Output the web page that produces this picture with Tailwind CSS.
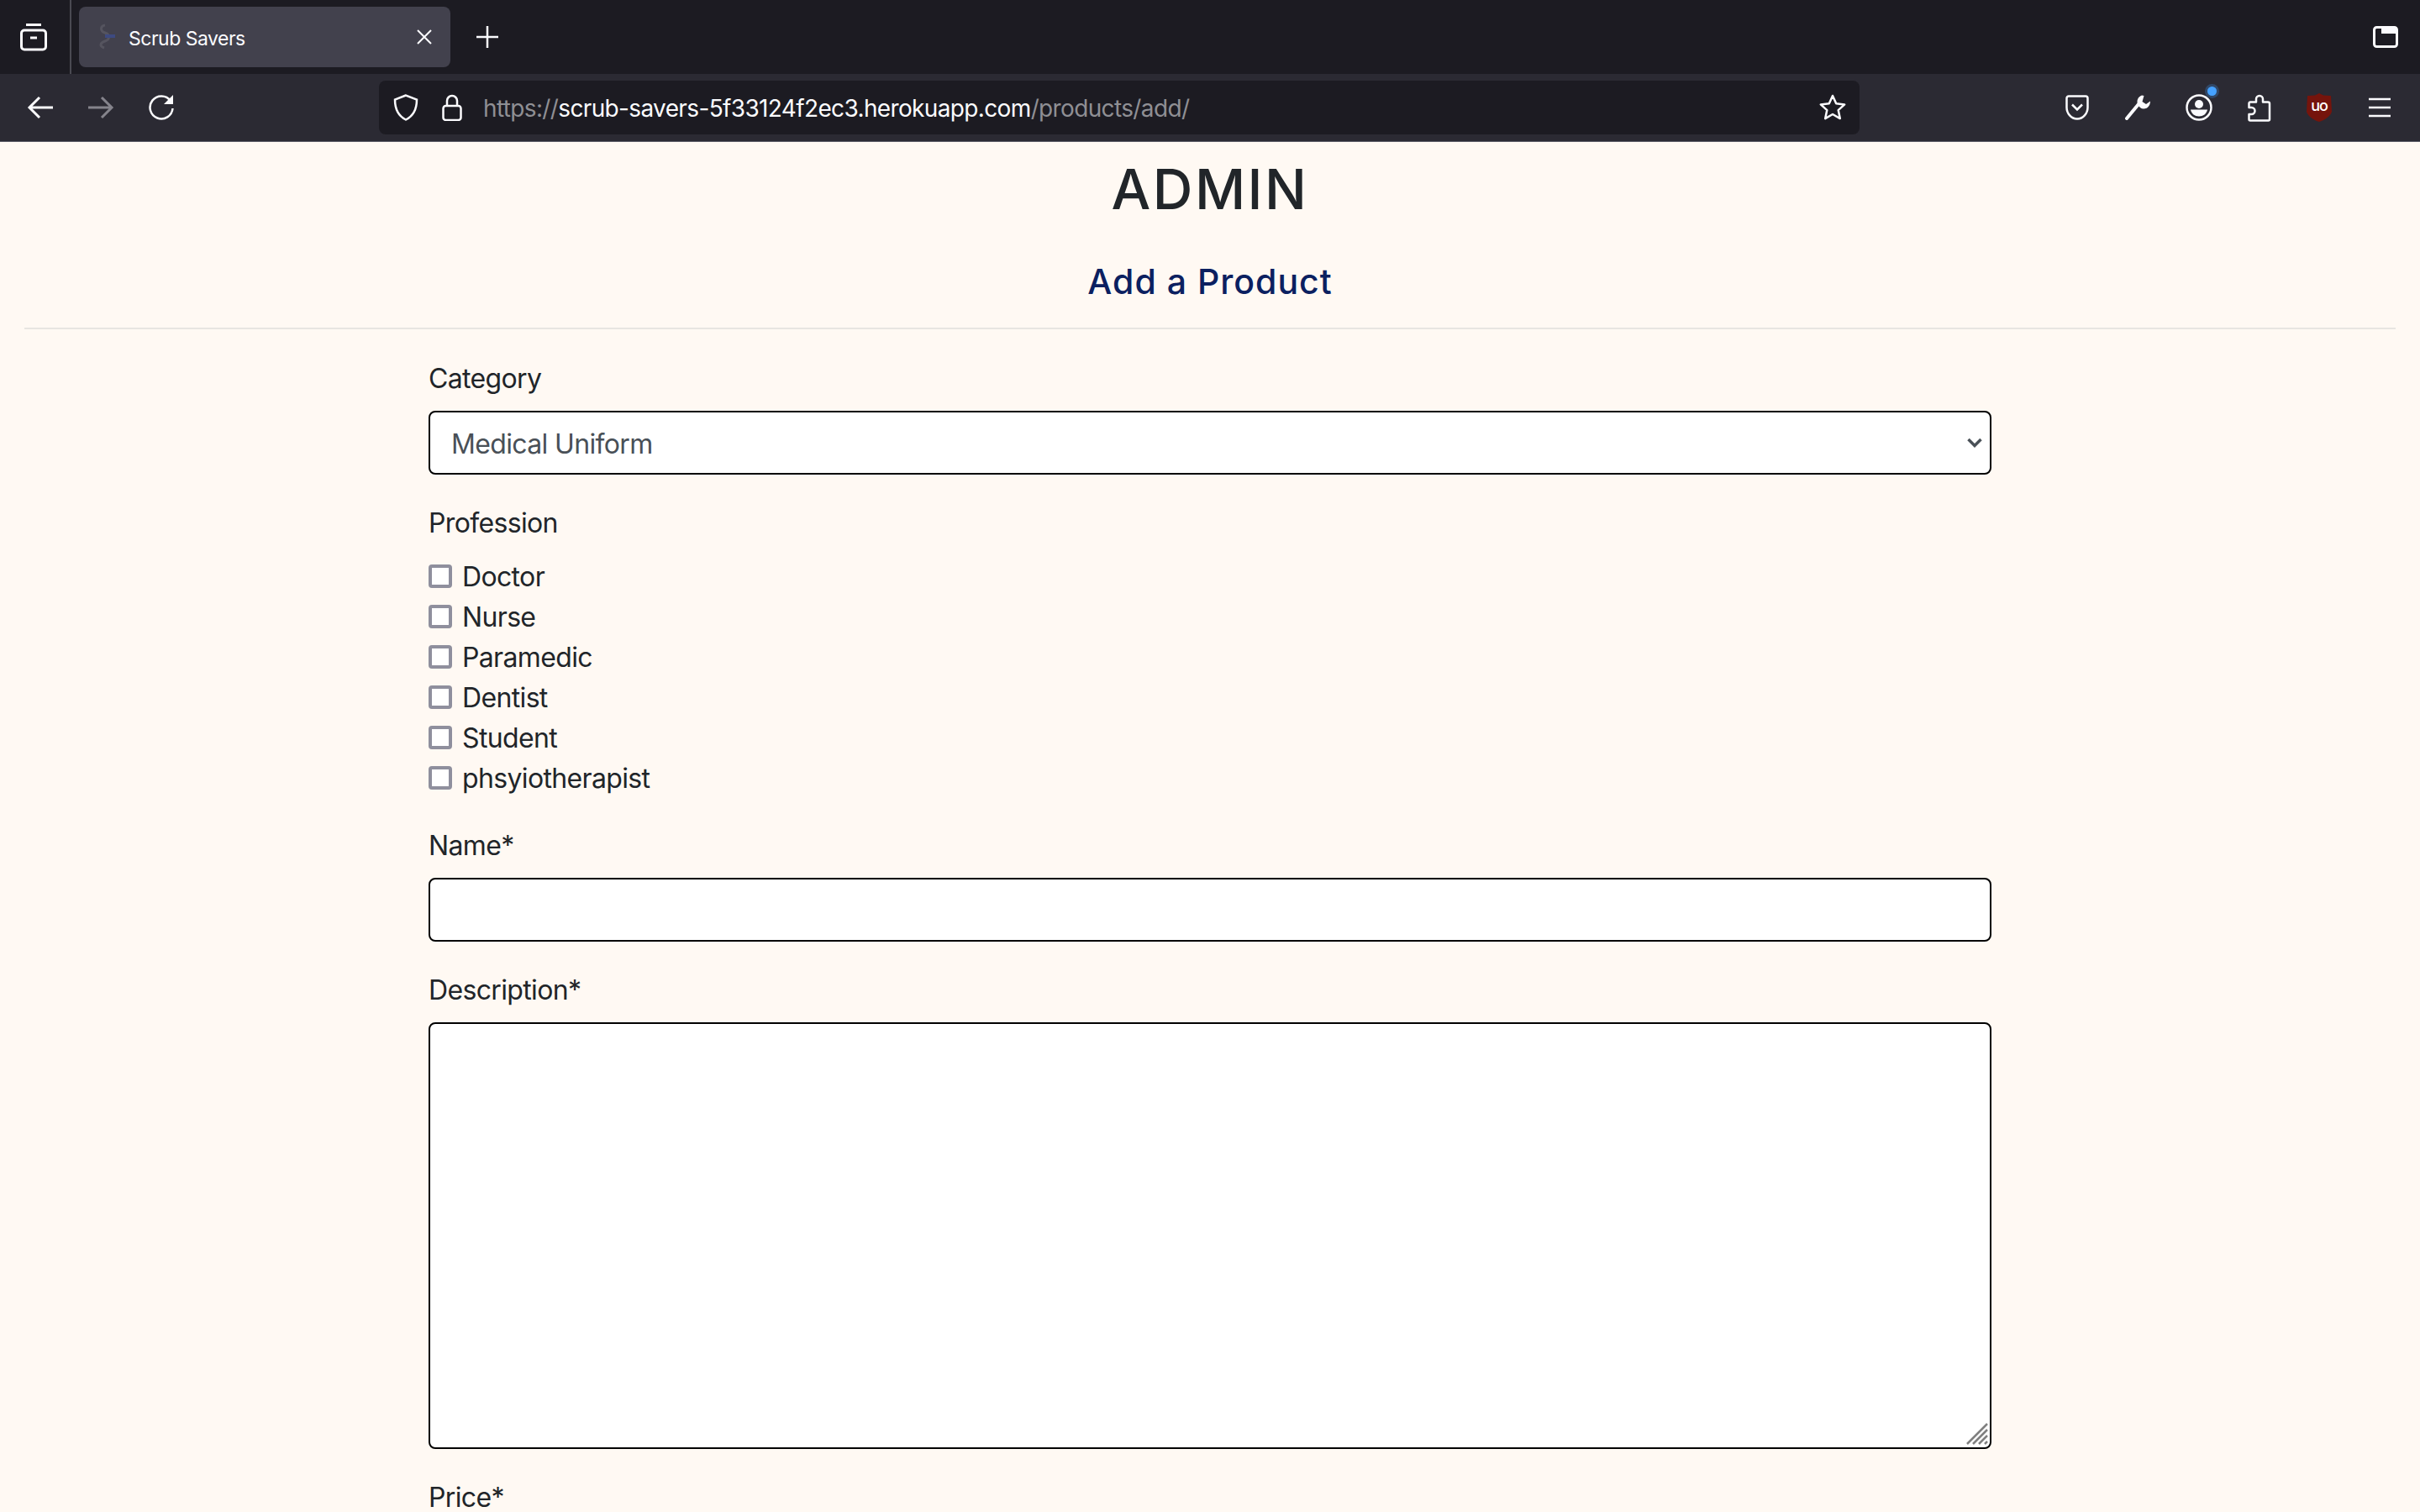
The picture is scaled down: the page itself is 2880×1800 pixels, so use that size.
<!DOCTYPE html>
<html lang="en">
<head>
    <meta charset="UTF-8">
    <title>Scrub Savers</title>
    <script src="https://cdn.jsdelivr.net/npm/@tailwindcss/browser@4"></script>
</head>
<body class="h-[1800px] overflow-hidden bg-[#fff9f3] font-['Inter',sans-serif] text-[32px] leading-[48px] tracking-[-0.65px] text-[#212529]">

    <!-- Tab strip -->
    <div class="flex h-[88px] items-center bg-[#1c1b22] text-white">
        <div class="flex h-[88px] w-[85px] shrink-0 items-center justify-center border-r-2 border-[#4a4a52]">
            <svg class="-ml-[3px]" width="36" height="36" viewBox="0 0 36 36" fill="none" stroke="#fbfbfe" stroke-width="3"><path d="M9 3.500h18"/><rect x="3.500" y="10" width="29" height="23" rx="3.500"/><path d="M14 19h8"/></svg>
        </div>
        <div class="ml-[9px] flex h-[72px] w-[442px] items-center rounded-[8px] bg-[#42414d] pl-[18px] pr-[22px]">
            <svg width="26" height="32" viewBox="0 0 26 32" fill="none"><path d="M13 2c-6 1-6 7 0 9s6 8 0 10-7 6-1 8" stroke="#55545f" stroke-width="3"/><path d="M13 15h12" stroke="#3d4a80" stroke-width="4"/></svg>
            <span class="ml-[15px] flex-1 pt-[3px] text-[23px] leading-[32px] tracking-[-0.5px] text-[#fbfbfe]">Scrub Savers</span>
            <svg width="18" height="18" viewBox="0 0 18 18" stroke="#fbfbfe" stroke-width="2"><path d="M1 1l16 16M17 1L1 17"/></svg>
        </div>
        <div class="ml-[16px] flex w-[56px] justify-center">
            <svg width="26" height="26" viewBox="0 0 26 26" stroke="#fbfbfe" stroke-width="2.500"><path d="M13 0v26M0 13h26"/></svg>
        </div>
        <div class="ml-auto mr-[26px]">
            <svg width="30" height="26" viewBox="0 0 30 26" fill="none"><rect x="1.500" y="1.500" width="27" height="23" rx="3" stroke="#fbfbfe" stroke-width="3"/><path d="M10 2h18v7H10z" fill="#fbfbfe"/></svg>
        </div>
    </div>

    <!-- Navigation toolbar -->
    <div class="flex h-[81px] items-center border-b border-[#5b5b66] bg-[#2b2a33] px-[12px] pb-[1px] text-white">
        <div class="flex h-[72px] w-[72px] items-center justify-center">
            <svg width="32" height="28" viewBox="0 0 32 28" fill="none" stroke="#fbfbfe" stroke-width="3"><path d="M31 14H3M15 2L3 14l12 12"/></svg>
        </div>
        <div class="flex h-[72px] w-[72px] items-center justify-center">
            <svg width="32" height="28" viewBox="0 0 32 28" fill="none" stroke="#85848c" stroke-width="3"><path d="M1 14h28M17 2l12 12-12 12"/></svg>
        </div>
        <div class="flex h-[72px] w-[72px] items-center justify-center">
            <svg width="32" height="32" viewBox="0 0 32 32" fill="none"><path d="M27 8A13.500 13.500 0 1 0 29.500 17" stroke="#fbfbfe" stroke-width="2.500"/><path d="M30 1v11H19z" fill="#fbfbfe"/></svg>
        </div>

        <div class="ml-[223px] flex h-[64px] w-[1762px] items-center rounded-[8px] bg-[#1c1b22] pl-[17px] pr-[16px]">
            <svg width="30" height="32" viewBox="0 0 30 32" fill="none" stroke="#fbfbfe" stroke-width="2.500"><path d="M15 1.500 2 6.500c0 11 3 19 13 24 10-5 13-13 13-24z"/></svg>
            <svg class="ml-[28px]" width="24" height="32" viewBox="0 0 24 32" fill="none" stroke="#fbfbfe" stroke-width="2.500"><path d="M6 15V8a6 6 0 0 1 12 0v7"/><rect x="1.500" y="14" width="21" height="17" rx="3"/></svg>
            <span class="ml-[25px] flex-1 pt-[2px] text-[28px] leading-[40px] tracking-[-0.64px] text-[#fbfbfe]"><span class="text-[#8f8f94]">https://</span>scrub-savers-5f33124f2ec3.herokuapp.com<span class="text-[#8f8f94]">/products/add/</span></span>
            <svg width="32" height="32" viewBox="0 0 32 32" fill="none" stroke="#fbfbfe" stroke-width="2.500" stroke-linejoin="round"><path d="M16 2l4.200 9.300 10 1.100-7.500 6.700 2.100 10L16 24l-8.800 5.100 2.100-10-7.500-6.700 10-1.100z"/></svg>
        </div>

        <div class="ml-auto flex">
            <div class="flex h-[72px] w-[72px] items-center justify-center">
                <svg width="28" height="30" viewBox="0 0 28 30" fill="none" stroke="#fbfbfe" stroke-width="2.500"><path d="M4 1.500h20A2.500 2.500 0 0 1 26.500 4v11c0 7-5.500 13.500-12.500 13.500S1.500 22 1.500 15V4A2.500 2.500 0 0 1 4 1.500z"/><path d="M8 11.500l6 6 6-6"/></svg>
            </div>
            <div class="flex h-[72px] w-[72px] items-center justify-center">
                <svg width="32" height="32" viewBox="0 0 32 32" fill="none"><path d="M3 29 17 12" stroke="#fbfbfe" stroke-width="4" stroke-linecap="round"/><path d="M21 1.500c-4.500 1.500-6.500 6-5 10.500 1.500 4.500 6 6.500 10 5 3-1.200 5-4.500 5-8.500l-5 3.500-4.500-3 2-7z" fill="#fbfbfe"/></svg>
            </div>
            <div class="relative flex h-[72px] w-[72px] items-center justify-center">
                <svg class="ml-[2px]" width="32" height="32" viewBox="0 0 32 32" fill="none"><circle cx="16" cy="16" r="14.500" stroke="#fbfbfe" stroke-width="2.500"/><circle cx="16" cy="12" r="5" fill="#fbfbfe"/><path d="M6 18.500h20c-1 5-5 8-10 8s-9-3-10-8z" fill="#fbfbfe"/></svg>
                <span class="absolute left-[47px] top-[11px] h-[11px] w-[11px] rounded-full bg-[#45a1ff] ring-[3px] ring-[#45a1ff]/25"></span>
            </div>
            <div class="flex h-[72px] w-[72px] items-center justify-center">
                <svg class="ml-[2px]" width="28" height="34" viewBox="0 0 28 34" fill="none" stroke="#fbfbfe" stroke-width="2.500" stroke-linejoin="round"><path d="M3 32.500a1.500 1.500 0 0 1-1.500-1.500v-6h3a4 4 0 0 0 0-8h-3v-5a1.500 1.500 0 0 1 1.500-1.500h7V7a4 4 0 0 1 8 0v3.500h6a2 2 0 0 1 2 2V31a1.500 1.500 0 0 1-1.500 1.500z"/></svg>
            </div>
            <div class="flex h-[72px] w-[72px] items-center justify-center">
                <svg width="30" height="34" viewBox="0 0 30 34"><path d="M15 0l5 2.500 9 .5 1 19c-2 6-9 10-15 12C9 32 2 28 0 22L1 3l9-.5z" fill="#75140c"/><text x="15" y="21" text-anchor="middle" fill="#fff" font-family="Inter, sans-serif" font-size="18" font-weight="500" letter-spacing="-1">uo</text></svg>
            </div>
            <div class="flex h-[72px] w-[72px] items-center justify-center">
                <svg width="26" height="24" viewBox="0 0 26 24" stroke="#fbfbfe" stroke-width="2.500"><path d="M0 2h26M0 12h26M0 22h26"/></svg>
            </div>
        </div>
    </div>

    <!-- Page -->
    <h1 class="mt-[18px] text-center text-[66px] leading-[76px] font-medium tracking-[2.500px] text-[#212529]">ADMIN</h1>
    <h2 class="mt-[46px] text-center text-[41px] leading-[52px] font-medium tracking-[1px] text-[#0b2060]">Add a Product</h2>
    <div class="mx-[29px] mt-[29px] border-t-2 border-[#e8e5e1]"></div>

    <form class="mx-auto mt-[35px] w-[1860px]">
        <label class="mb-[14px] block">Category</label>
        <div class="relative mb-[34px]">
            <select class="block h-[76px] w-full appearance-none rounded-[8px] border-2 border-black bg-white px-[25px] pt-[3px] text-[#495057]">
                <option>Medical Uniform</option>
            </select>
            <svg class="absolute right-[11px] top-[32px]" width="18" height="12" viewBox="0 0 18 12" fill="none" stroke="#495057" stroke-width="3.500"><path d="M1.500 2 9 9.500 16.500 2"/></svg>
        </div>

        <label class="mb-[16px] block">Profession</label>
        <div class="mb-[32px]">
            <label class="flex h-[48px] items-center"><input type="checkbox" class="mr-[12px] mb-[2px] h-[28px] w-[28px] appearance-none rounded-[4px] border-[4px] border-[#8f8f9d] bg-white">Doctor</label>
            <label class="flex h-[48px] items-center"><input type="checkbox" class="mr-[12px] mb-[2px] h-[28px] w-[28px] appearance-none rounded-[4px] border-[4px] border-[#8f8f9d] bg-white">Nurse</label>
            <label class="flex h-[48px] items-center"><input type="checkbox" class="mr-[12px] mb-[2px] h-[28px] w-[28px] appearance-none rounded-[4px] border-[4px] border-[#8f8f9d] bg-white">Paramedic</label>
            <label class="flex h-[48px] items-center"><input type="checkbox" class="mr-[12px] mb-[2px] h-[28px] w-[28px] appearance-none rounded-[4px] border-[4px] border-[#8f8f9d] bg-white">Dentist</label>
            <label class="flex h-[48px] items-center"><input type="checkbox" class="mr-[12px] mb-[2px] h-[28px] w-[28px] appearance-none rounded-[4px] border-[4px] border-[#8f8f9d] bg-white">Student</label>
            <label class="flex h-[48px] items-center"><input type="checkbox" class="mr-[12px] mb-[2px] h-[28px] w-[28px] appearance-none rounded-[4px] border-[4px] border-[#8f8f9d] bg-white">phsyiotherapist</label>
        </div>

        <label class="mb-[14px] block">Name*</label>
        <input type="text" class="mb-[34px] block h-[76px] w-full rounded-[8px] border-2 border-black bg-white">

        <label class="mb-[14px] block">Description*</label>
        <div class="relative mb-[34px]">
            <textarea class="block h-[508px] w-full resize-none rounded-[8px] border-2 border-black bg-white"></textarea>
            <svg class="absolute bottom-[5px] right-[4px]" width="26" height="26" viewBox="0 0 26 26" stroke="#808080" stroke-width="2.500"><path d="M1 25 25 1M8 25 25 8M15 25 25 15M22 25l3-3"/></svg>
        </div>

        <label class="block">Price*</label>
    </form>

</body>
</html>
